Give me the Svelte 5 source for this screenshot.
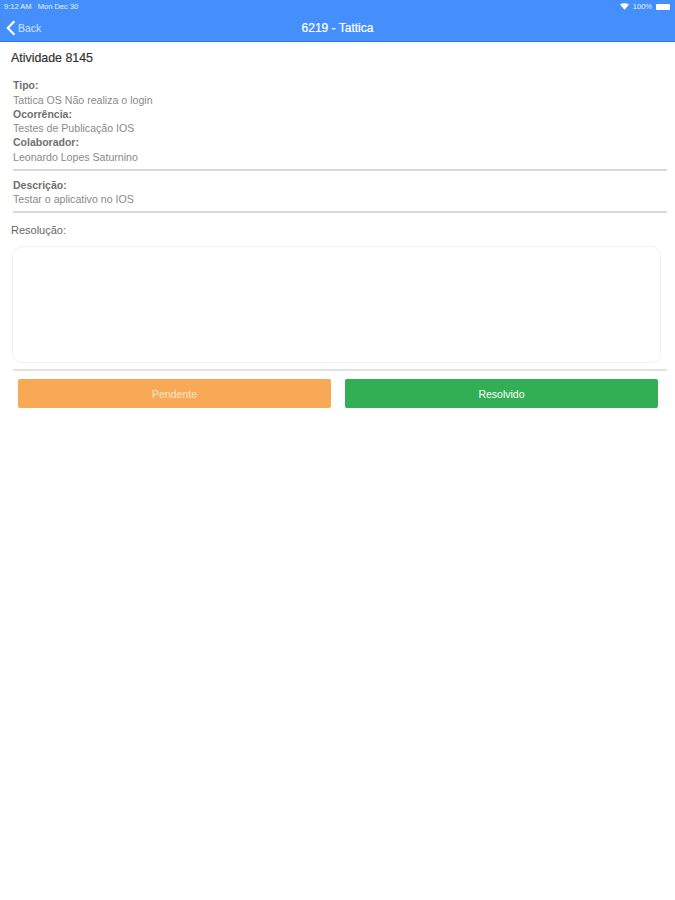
<script lang="ts">
  const info = [
    { label: 'Tipo:', value: 'Tattica OS Não realiza o login' },
    { label: 'Ocorrência:', value: 'Testes de Publicação IOS' },
    { label: 'Colaborador:', value: 'Leonardo Lopes Saturnino' }
  ];
</script>

<div class="page">
  <header class="topbar">
    <div class="status">
      <span>9:12 AM&nbsp;&nbsp;&nbsp;Mon Dec 30</span>
      <span class="status-right">
        <svg width="9" height="7" viewBox="0 0 11 8"><path d="M0 1.6C3.2-.5 7.8-.5 11 1.6L5.5 8z" fill="#fff" /></svg>
        <span>100%</span>
        <span class="battery"></span>
      </span>
    </div>
    <nav class="nav">
      <a class="back" href="/">
        <svg width="10" height="16" viewBox="0 0 10 16"><path d="M8.4 1.2 1.8 8l6.6 6.8" fill="none" stroke="#fff" stroke-width="2.2" /></svg>
        <span>Back</span>
      </a>
      <h1>6219 - Tattica</h1>
    </nav>
  </header>

  <main class="content">
    <h2>Atividade 8145</h2>

    <section class="block first">
      {#each info as row}
        <div class="row">
          <strong>{row.label}</strong>
          <p>{row.value}</p>
        </div>
      {/each}
    </section>

    <section class="block second">
      <div class="row">
        <strong>Descrição:</strong>
        <p>Testar o aplicativo no IOS</p>
      </div>
    </section>

    <label class="res-label" for="res">Resolução:</label>
    <textarea id="res"></textarea>

    <div class="actions">
      <button class="pending" type="button">Pendente</button>
      <button class="done" type="button">Resolvido</button>
    </div>
  </main>
</div>

<style>
  :global(body) {
    margin: 0;
    background: #fff;
    font-family: "Liberation Sans", Arial, sans-serif;
  }

  .page {
    min-height: 900px;
    background: #fff;
  }

  .topbar {
    height: 41px;
    background: #458ffd;
    border-bottom: 1px solid #2a78e8;
    color: #fff;
  }

  .status {
    height: 13px;
    display: flex;
    justify-content: space-between;
    align-items: center;
    padding: 0 5px 0 4px;
    font-size: 7.5px;
    color: #e6f0ff;
  }

  .status-right {
    display: flex;
    align-items: center;
    gap: 4px;
  }

  .battery {
    width: 14px;
    height: 6px;
    background: #fff;
    border-radius: 1px;
  }

  .nav {
    position: relative;
    height: 28px;
    padding-top: 1px;
    box-sizing: border-box;
    display: flex;
    align-items: center;
    justify-content: center;
  }

  .back {
    position: absolute;
    left: 6px;
    top: 7px;
    display: flex;
    align-items: center;
    gap: 2px;
    color: #d3e4ff;
    font-size: 10.5px;
    text-decoration: none;
  }

  h1 {
    margin: 0;
    font-size: 12px;
    font-weight: 400;
    -webkit-text-stroke: 0.2px #fff;
  }

  .content {
    padding: 9px 8px 0 11px;
  }

  h2 {
    margin: 0;
    height: 14px;
    font-size: 12.4px;
    line-height: 14px;
    font-weight: 400;
    color: #333;
    -webkit-text-stroke: 0.2px #333;
  }

  .block {
    margin-left: 2px;
    border-bottom: 2px solid #d9d9d9;
  }

  .first {
    padding: 13px 0 5px;
  }

  .second {
    padding: 7px 0 5px;
  }

  .row strong {
    display: block;
    height: 14.5px;
    font-size: 10.5px;
    line-height: 14px;
    font-weight: 700;
    color: #707070;
  }

  .row p {
    margin: 0;
    height: 14px;
    font-size: 10.6px;
    line-height: 14px;
    color: #8a8a8a;
  }

  .res-label {
    display: block;
    margin-top: 10px;
    height: 14px;
    font-size: 11px;
    line-height: 14px;
    color: #666;
  }

  textarea {
    display: block;
    box-sizing: border-box;
    width: 649px;
    height: 117px;
    margin: 9px 0 0 1px;
    border: 1.5px solid #f0f0f0;
    border-radius: 10px;
    background: #fff;
    resize: none;
    outline: none;
  }

  .actions {
    display: flex;
    gap: 14px;
    margin: 6px 0 0 2px;
    padding: 8px 9px 0 5px;
    border-top: 2px solid #e2e2e2;
  }

  button {
    flex: 1;
    height: 29px;
    border: none;
    border-radius: 2px;
    color: #fff;
    font-family: inherit;
    font-size: 10.5px;
    padding: 0;
  }

  .pending {
    background: #f7a956;
    color: #fde6cc;
  }

  .done {
    background: #32ae54;
  }
</style>
